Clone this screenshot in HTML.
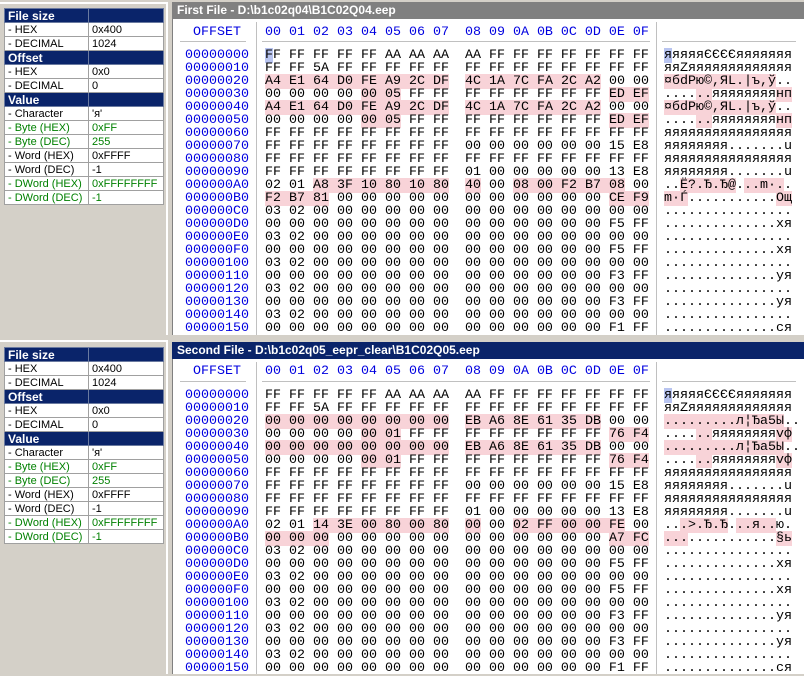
<!DOCTYPE html>
<html><head><meta charset="utf-8">
<style>
*{margin:0;padding:0;box-sizing:border-box}
body{width:804px;height:674px;background:#d4d0c8;position:relative;overflow:hidden;font-family:"Liberation Sans",sans-serif}
.tbl{position:absolute;left:4px;width:160px;border-collapse:collapse;font-size:11px;background:#fff;table-layout:fixed}
.tbl td{height:14px;line-height:12px;border:1px solid #a0a0a0;padding:0 0 0 3px;white-space:nowrap;overflow:hidden}
.tbl td:first-child{width:84px}
.tbl tr.hd td{background:#0a246a;color:#fff;font-weight:bold;font-size:12px;border-color:#6a7aa0}
.tbl tr.g td{color:#008000}
.frame{position:absolute;left:0;width:168px;border-right:2px solid #fff;border-top:2px solid #fff}
.pane{position:absolute;left:172px;width:632px;background:#fff;overflow:hidden;border-left:1px solid #808080}
.title{position:absolute;left:172px;width:632px;height:17px;color:#fff;font-weight:bold;font-size:12px;line-height:17px;padding-left:5px}
.mono{position:absolute;font-family:"Liberation Mono","DejaVu Sans Mono",monospace;font-size:13.33px;line-height:13px;white-space:pre;color:#000}
.blue{color:#0000e0}
.h{background:#f8d3d8}
.c{background:#b8c4f0}
.vl{position:absolute;width:1px;background:#c0c0c0}
.hl{position:absolute;height:1px;background:#c0c0c0}
</style></head><body>

<div class="frame" style="top:2px;height:333px"></div>
<table class="tbl" style="top:8px">
<tr class="hd"><td>File size</td><td></td></tr>
<tr><td>- HEX</td><td>0x400</td></tr>
<tr><td>- DECIMAL</td><td>1024</td></tr>
<tr class="hd"><td>Offset</td><td></td></tr>
<tr><td>- HEX</td><td>0x0</td></tr>
<tr><td>- DECIMAL</td><td>0</td></tr>
<tr class="hd"><td>Value</td><td></td></tr>
<tr><td>- Character</td><td>'я'</td></tr>
<tr class="g"><td>- Byte (HEX)</td><td>0xFF</td></tr>
<tr class="g"><td>- Byte (DEC)</td><td>255</td></tr>
<tr><td>- Word (HEX)</td><td>0xFFFF</td></tr>
<tr><td>- Word (DEC)</td><td>-1</td></tr>
<tr class="g"><td>- DWord (HEX)</td><td>0xFFFFFFFF</td></tr>
<tr class="g"><td>- DWord (DEC)</td><td>-1</td></tr>
</table>

<div class="frame" style="top:340px;height:334px"></div>
<table class="tbl" style="top:347px">
<tr class="hd"><td>File size</td><td></td></tr>
<tr><td>- HEX</td><td>0x400</td></tr>
<tr><td>- DECIMAL</td><td>1024</td></tr>
<tr class="hd"><td>Offset</td><td></td></tr>
<tr><td>- HEX</td><td>0x0</td></tr>
<tr><td>- DECIMAL</td><td>0</td></tr>
<tr class="hd"><td>Value</td><td></td></tr>
<tr><td>- Character</td><td>'я'</td></tr>
<tr class="g"><td>- Byte (HEX)</td><td>0xFF</td></tr>
<tr class="g"><td>- Byte (DEC)</td><td>255</td></tr>
<tr><td>- Word (HEX)</td><td>0xFFFF</td></tr>
<tr><td>- Word (DEC)</td><td>-1</td></tr>
<tr class="g"><td>- DWord (HEX)</td><td>0xFFFFFFFF</td></tr>
<tr class="g"><td>- DWord (DEC)</td><td>-1</td></tr>
</table>

<!-- TOP PANE -->
<div class="title" style="top:2px;background:#808080">First File - D:\b1c02q04\B1C02Q04.eep</div>
<div class="pane" style="top:19px;height:316px"></div>
<div class="vl" style="left:256px;top:22px;height:313px"></div>
<div class="vl" style="left:656px;top:22px;height:313px"></div>
<div class="hl" style="left:180px;top:41px;width:66px"></div>
<div class="hl" style="left:262px;top:41px;width:388px"></div>
<div class="hl" style="left:662px;top:41px;width:134px"></div>
<div class="mono blue" style="left:193px;top:26px">OFFSET</div>
<div class="mono blue" style="left:265px;top:26px">00 01 02 03 04 05 06 07  08 09 0A 0B 0C 0D 0E 0F</div>
<div class="mono blue" style="left:185px;top:49px">00000000
00000010
00000020
00000030
00000040
00000050
00000060
00000070
00000080
00000090
000000A0
000000B0
000000C0
000000D0
000000E0
000000F0
00000100
00000110
00000120
00000130
00000140
00000150</div>
<div class="mono" style="left:265px;top:49px"><span class="c">F</span>F FF FF FF FF AA AA AA  AA FF FF FF FF FF FF FF
FF FF 5A FF FF FF FF FF  FF FF FF FF FF FF FF FF
<span class="h">A4 E1 64 D0 FE A9 2C DF</span>  <span class="h">4C 1A 7C FA 2C A2</span> 00 00
00 00 00 00 <span class="h">00 05</span> FF FF  FF FF FF FF FF FF <span class="h">ED EF</span>
<span class="h">A4 E1 64 D0 FE A9 2C DF</span>  <span class="h">4C 1A 7C FA 2C A2</span> 00 00
00 00 00 00 <span class="h">00 05</span> FF FF  FF FF FF FF FF FF <span class="h">ED EF</span>
FF FF FF FF FF FF FF FF  FF FF FF FF FF FF FF FF
FF FF FF FF FF FF FF FF  00 00 00 00 00 00 15 E8
FF FF FF FF FF FF FF FF  FF FF FF FF FF FF FF FF
FF FF FF FF FF FF FF FF  01 00 00 00 00 00 13 E8
02 01 <span class="h">A8 3F 10 80 10 80</span>  <span class="h">40</span> 00 <span class="h">08 00 F2 B7 08</span> 00
<span class="h">F2 B7 81</span> 00 00 00 00 00  00 00 00 00 00 00 <span class="h">CE F9</span>
03 02 00 00 00 00 00 00  00 00 00 00 00 00 00 00
00 00 00 00 00 00 00 00  00 00 00 00 00 00 F5 FF
03 02 00 00 00 00 00 00  00 00 00 00 00 00 00 00
00 00 00 00 00 00 00 00  00 00 00 00 00 00 F5 FF
03 02 00 00 00 00 00 00  00 00 00 00 00 00 00 00
00 00 00 00 00 00 00 00  00 00 00 00 00 00 F3 FF
03 02 00 00 00 00 00 00  00 00 00 00 00 00 00 00
00 00 00 00 00 00 00 00  00 00 00 00 00 00 F3 FF
03 02 00 00 00 00 00 00  00 00 00 00 00 00 00 00
00 00 00 00 00 00 00 00  00 00 00 00 00 00 F1 FF</div>
<div class="mono" style="left:664px;top:49px"><span class="c">я</span>яяяяЄЄЄЄяяяяяяя
яяZяяяяяяяяяяяяя
<span class="h">¤бdРю©,ЯL.|ъ,ў</span>..
....<span class="h">..</span>яяяяяяяя<span class="h">нп</span>
<span class="h">¤бdРю©,ЯL.|ъ,ў</span>..
....<span class="h">..</span>яяяяяяяя<span class="h">нп</span>
яяяяяяяяяяяяяяяя
яяяяяяяя.......u
яяяяяяяяяяяяяяяя
яяяяяяяя.......u
..<span class="h">Ё?.Ђ.Ђ@</span>.<span class="h">..m·.</span>.
<span class="h">m·Ѓ</span>...........<span class="h">Ощ</span>
................
..............хя
................
..............хя
................
..............уя
................
..............уя
................
..............ся</div>

<!-- BOTTOM PANE -->
<div class="title" style="top:342px;background:#0a246a">Second File - D:\b1c02q05_eepr_clear\B1C02Q05.eep</div>
<div class="pane" style="top:359px;height:315px"></div>
<div class="vl" style="left:256px;top:362px;height:312px"></div>
<div class="vl" style="left:656px;top:362px;height:312px"></div>
<div class="hl" style="left:180px;top:381px;width:66px"></div>
<div class="hl" style="left:262px;top:381px;width:388px"></div>
<div class="hl" style="left:662px;top:381px;width:134px"></div>
<div class="mono blue" style="left:193px;top:365px">OFFSET</div>
<div class="mono blue" style="left:265px;top:365px">00 01 02 03 04 05 06 07  08 09 0A 0B 0C 0D 0E 0F</div>
<div class="mono blue" style="left:185px;top:389px">00000000
00000010
00000020
00000030
00000040
00000050
00000060
00000070
00000080
00000090
000000A0
000000B0
000000C0
000000D0
000000E0
000000F0
00000100
00000110
00000120
00000130
00000140
00000150</div>
<div class="mono" style="left:265px;top:389px">FF FF FF FF FF AA AA AA  AA FF FF FF FF FF FF FF
FF FF 5A FF FF FF FF FF  FF FF FF FF FF FF FF FF
<span class="h">00 00 00 00 00 00 00 00</span>  <span class="h">EB A6 8E 61 35 DB</span> 00 00
00 00 00 00 <span class="h">00 01</span> FF FF  FF FF FF FF FF FF <span class="h">76 F4</span>
<span class="h">00 00 00 00 00 00 00 00</span>  <span class="h">EB A6 8E 61 35 DB</span> 00 00
00 00 00 00 <span class="h">00 01</span> FF FF  FF FF FF FF FF FF <span class="h">76 F4</span>
FF FF FF FF FF FF FF FF  FF FF FF FF FF FF FF FF
FF FF FF FF FF FF FF FF  00 00 00 00 00 00 15 E8
FF FF FF FF FF FF FF FF  FF FF FF FF FF FF FF FF
FF FF FF FF FF FF FF FF  01 00 00 00 00 00 13 E8
02 01 <span class="h">14 3E 00 80 00 80</span>  <span class="h">00</span> 00 <span class="h">02 FF 00 00 FE</span> 00
<span class="h">00 00 00</span> 00 00 00 00 00  00 00 00 00 00 00 <span class="h">A7 FC</span>
03 02 00 00 00 00 00 00  00 00 00 00 00 00 00 00
00 00 00 00 00 00 00 00  00 00 00 00 00 00 F5 FF
03 02 00 00 00 00 00 00  00 00 00 00 00 00 00 00
00 00 00 00 00 00 00 00  00 00 00 00 00 00 F5 FF
03 02 00 00 00 00 00 00  00 00 00 00 00 00 00 00
00 00 00 00 00 00 00 00  00 00 00 00 00 00 F3 FF
03 02 00 00 00 00 00 00  00 00 00 00 00 00 00 00
00 00 00 00 00 00 00 00  00 00 00 00 00 00 F3 FF
03 02 00 00 00 00 00 00  00 00 00 00 00 00 00 00
00 00 00 00 00 00 00 00  00 00 00 00 00 00 F1 FF</div>
<div class="mono" style="left:664px;top:389px"><span class="c">я</span>яяяяЄЄЄЄяяяяяяя
яяZяяяяяяяяяяяяя
<span class="h">.........л¦Ђa5Ы</span>..
....<span class="h">..</span>яяяяяяяя<span class="h">vф</span>
<span class="h">.........л¦Ђa5Ы</span>..
....<span class="h">..</span>яяяяяяяя<span class="h">vф</span>
яяяяяяяяяяяяяяяя
яяяяяяяя.......u
яяяяяяяяяяяяяяяя
яяяяяяяя.......u
..<span class="h">.&gt;.Ђ.Ђ</span>.<span class="h">..я..</span>ю.
<span class="h">...</span>...........<span class="h">§ь</span>
................
..............хя
................
..............хя
................
..............уя
................
..............уя
................
..............ся</div>
</body></html>
